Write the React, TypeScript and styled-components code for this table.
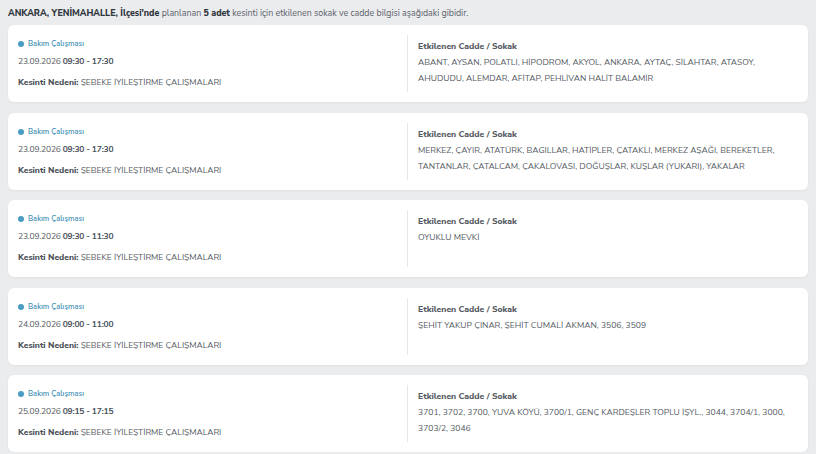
import React from "react";
import styled, { createGlobalStyle } from "styled-components";

const Global = createGlobalStyle`
  html, body { margin: 0; padding: 0; background: #ebecee; }
  body { font-family: "Nunito Sans", Lato, "Open Sans", sans-serif; color: #555b63; }
`;

const Page = styled.div`
  padding: 0 8px;
  display: flex;
  flex-direction: column;
`;

const Intro = styled.p`
  margin: 0;
  padding: 7px 0 5px;
  font-size: 8.85px;
  line-height: 13px;
  color: #5d636b;
  b { color: #2f353c; font-weight: 800; }
`;

const List = styled.div`
  display: flex;
  flex-direction: column;
  gap: 10.5px;
`;

const Card = styled.div`
  background: #ffffff;
  border-radius: 6px;
  box-shadow: 0 1px 3px rgba(0, 0, 0, 0.05);
  padding: 10px 10px;
  display: flex;
`;

const Left = styled.div`
  width: 389px;
  flex: none;
  display: flex;
  flex-direction: column;
`;

const Tag = styled.div`
  display: flex;
  align-items: center;
  gap: 4px;
  font-size: 7.5px;
  line-height: 18px;
  color: #3d8fb5;
  font-weight: 600;
`;

const Dot = styled.span`
  width: 6px;
  height: 6px;
  border-radius: 50%;
  background: #4a9cc2;
`;

const Line = styled.div<{ $gap?: number; $tight?: boolean }>`
  font-size: 8.5px;
  line-height: 16px;
  margin-top: ${(p) => p.$gap ?? 0}px;
  letter-spacing: ${(p) => (p.$tight ? "-0.2px" : "0")};
  b { font-weight: 800; color: #4b5158; }
`;

const Time = styled.b`
  && { font-weight: 700; }
`;

const Right = styled.div`
  flex: 1;
  border-left: 1px solid #e6e7ea;
  padding: 3px 0 0 10px;
  min-height: 54px;
`;

const Title = styled.div`
  font-size: 8.6px;
  line-height: 16px;
  font-weight: 800;
  color: #555b63;
`;

const Streets = styled.div`
  font-size: 8.55px;
  line-height: 16px;
`;

type Item = { date: string; time: string; streets: string };

const items: Item[] = [
  {
    date: "23.09.2026",
    time: "09:30 - 17:30",
    streets:
      "ABANT, AYSAN, POLATLI, HİPODROM, AKYOL, ANKARA, AYTAÇ, SİLAHTAR, ATASOY, AHUDUDU, ALEMDAR, AFİTAP, PEHLİVAN HALİT BALAMİR",
  },
  {
    date: "23.09.2026",
    time: "09:30 - 17:30",
    streets:
      "MERKEZ, ÇAYIR, ATATÜRK, BAGILLAR, HATİPLER, ÇATAKLI, MERKEZ AŞAĞI, BEREKETLER, TANTANLAR, ÇATALCAM, ÇAKALOVASI, DOĞUŞLAR, KUŞLAR (YUKARI), YAKALAR",
  },
  { date: "23.09.2026", time: "09:30 - 11:30", streets: "OYUKLU MEVKİ" },
  {
    date: "24.09.2026",
    time: "09:00 - 11:00",
    streets: "ŞEHİT YAKUP ÇINAR, ŞEHİT CUMALİ AKMAN, 3506, 3509",
  },
  {
    date: "25.09.2026",
    time: "09:15 - 17:15",
    streets:
      "3701, 3702, 3700, YUVA KÖYÜ, 3700/1, GENÇ KARDEŞLER TOPLU İŞYL., 3044, 3704/1, 3000, 3703/2, 3046",
  },
];

export default function App() {
  return (
    <>
      <Global />
      <Page>
        <Intro>
          <b>ANKARA, YENİMAHALLE, İlçesi'nde</b> planlanan <b>5 adet</b> kesinti için etkilenen sokak ve cadde
          bilgisi aşağıdaki gibidir.
        </Intro>
        <List>
          {items.map((it, i) => (
            <Card key={i}>
              <Left>
                <Tag>
                  <Dot />
                  Bakım Çalışması
                </Tag>
                <Line $tight>
                  {it.date} <Time>{it.time}</Time>
                </Line>
                <Line $gap={5}>
                  <b>Kesinti Nedeni:</b> ŞEBEKE İYİLEŞTİRME ÇALIŞMALARI
                </Line>
              </Left>
              <Right>
                <Title>Etkilenen Cadde / Sokak</Title>
                <Streets>{it.streets}</Streets>
              </Right>
            </Card>
          ))}
        </List>
      </Page>
    </>
  );
}
